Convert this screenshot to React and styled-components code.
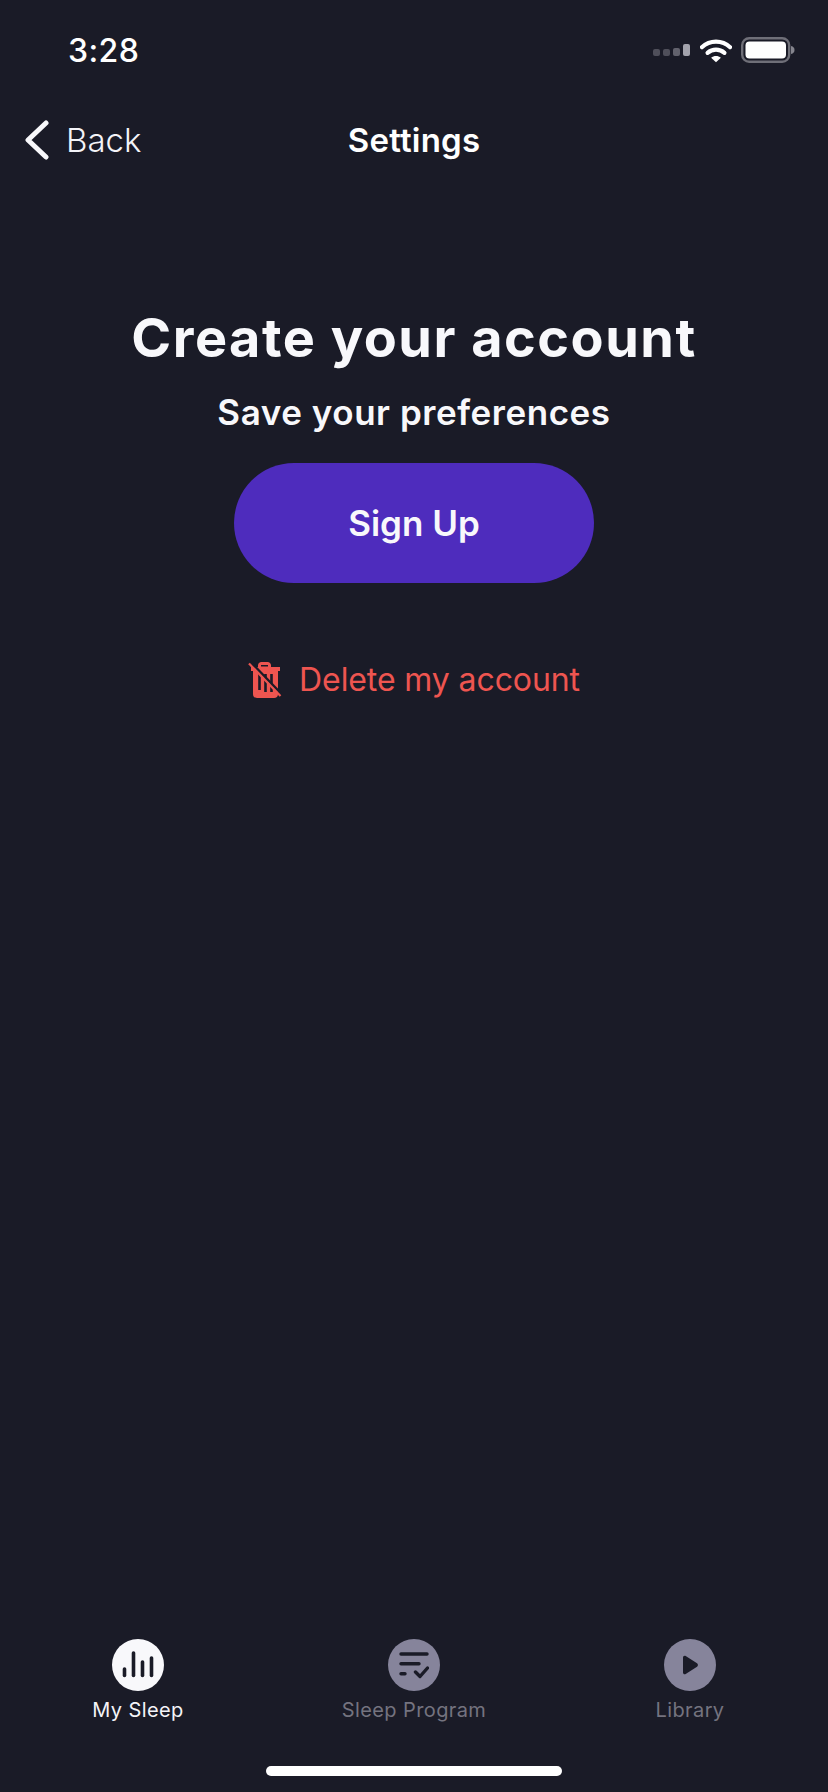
import React from "react";
import styled, { createGlobalStyle } from "styled-components";

const GlobalStyle = createGlobalStyle`
  html, body {
    margin: 0;
    padding: 0;
    background: #1a1b27;
  }
`;

const Screen = styled.div`
  width: 828px;
  height: 1792px;
  display: flex;
  flex-direction: column;
  background: #1a1b27;
  color: #fff;
  font-family: Inter, "Liberation Sans", sans-serif;
  overflow: hidden;
`;

const StatusBar = styled.div`
  height: 100px;
  box-sizing: border-box;
  padding: 0 33px 0 68px;
  display: flex;
  align-items: center;
  justify-content: space-between;
`;

const Time = styled.div`
  font-size: 32px;
  font-weight: 500;
  letter-spacing: 0.4px;
`;

const StatusIcons = styled.div`
  display: flex;
  align-items: center;
  gap: 9px;
`;

const NavBar = styled.div`
  height: 80px;
  box-sizing: border-box;
  padding: 0 24px;
  display: grid;
  grid-template-columns: 1fr auto 1fr;
  align-items: center;
`;

const BackLink = styled.div`
  display: flex;
  align-items: center;
  gap: 16px;
  font-size: 33px;
  font-weight: 350;
  color: #f4f4f8;
`;

const NavTitle = styled.div`
  font-size: 33px;
  font-weight: 600;
  letter-spacing: 0.2px;
`;

const Main = styled.main`
  flex: 1;
  display: flex;
  flex-direction: column;
  align-items: center;
  padding-top: 121px;
`;

const Title = styled.h1`
  margin: 0;
  font-size: 54px;
  line-height: 74px;
  font-weight: 700;
  color: #f8f8fb;
  letter-spacing: 1.5px;
`;

const Subtitle = styled.h2`
  margin: 15px 0 0;
  font-size: 35px;
  line-height: 44px;
  font-weight: 600;
  color: #f8f8fb;
  letter-spacing: 0.55px;
`;

const SignUpButton = styled.button`
  margin-top: 29px;
  width: 360px;
  height: 120px;
  border: none;
  border-radius: 60px;
  background: #4e2cbd;
  color: #f8f8fb;
  font-family: inherit;
  font-size: 35px;
  font-weight: 600;
`;

const DeleteRow = styled.div`
  margin-top: 77px;
  display: flex;
  align-items: center;
  gap: 17px;
  font-size: 32px;
  font-weight: 400;
  letter-spacing: -0.1px;
  color: #ee5550;
`;

const TabBar = styled.nav`
  display: grid;
  grid-template-columns: repeat(3, 1fr);
  justify-items: center;
`;

const Tab = styled.div`
  display: flex;
  flex-direction: column;
  align-items: center;
  gap: 6px;
  color: ${(p) => (p.$active ? "#f4f4f8" : "#74737f")};
  font-size: 20px;
  line-height: 26px;
  letter-spacing: 0.4px;
`;

const TabIcon = styled.div`
  width: 52px;
  height: 52px;
  border-radius: 50%;
  display: flex;
  align-items: center;
  justify-content: center;
  background: ${(p) => (p.$active ? "#f8f8fb" : "#86849b")};
`;

const HomeArea = styled.div`
  height: 69px;
  box-sizing: border-box;
  padding-top: 43px;
  display: flex;
  justify-content: center;
`;

const HomeBar = styled.div`
  width: 296px;
  height: 10px;
  border-radius: 5px;
  background: #fff;
`;

const SignalIcon = () => (
  <svg width="38" height="14" viewBox="0 0 38 14">
    <rect x="0" y="6" width="7" height="7" rx="2" fill="#4f4f5a" />
    <rect x="10" y="6" width="7" height="7" rx="2" fill="#4f4f5a" />
    <rect x="20" y="5" width="7" height="8" rx="2" fill="#62626d" />
    <rect x="30" y="1" width="7" height="12" rx="2" fill="#a3a3ad" />
  </svg>
);

const WifiIcon = () => (
  <svg width="32" height="25" viewBox="0 0 34 26" fill="none">
    <path d="M2 9.5C10.5 1.5 23.5 1.5 32 9.5" stroke="#fff" strokeWidth="4.4" strokeLinecap="round" />
    <path d="M8 15.5C13.2 11 20.8 11 26 15.5" stroke="#fff" strokeWidth="4.4" strokeLinecap="round" />
    <path d="M17 25.5L11.8 20.6C14.8 18.4 19.2 18.4 22.2 20.6Z" fill="#fff" />
  </svg>
);

const BatteryIcon = () => (
  <svg width="54" height="26" viewBox="0 0 54 26">
    <rect x="1.2" y="1.2" width="47" height="23.6" rx="7" fill="none" stroke="#6f6f78" strokeWidth="2.4" />
    <rect x="4.5" y="4.5" width="40.5" height="17" rx="4" fill="#fff" />
    <path d="M50 9C52.5 9.5 53.5 11 53.5 13C53.5 15 52.5 16.5 50 17Z" fill="#85858e" />
  </svg>
);

const ChevronLeft = () => (
  <svg width="26" height="40" viewBox="0 0 26 40" fill="none">
    <path d="M22 3L4 20L22 37" stroke="#f8f8fb" strokeWidth="5" strokeLinecap="round" strokeLinejoin="round" />
  </svg>
);

const TrashOffIcon = () => (
  <svg width="34" height="38" viewBox="0 0 34 38" fill="none">
    <path d="M10 6V4.5C10 2.5 11.5 1 13.5 1H19.5C21.5 1 23 2.5 23 4.5V6H32V10H30V33C30 35.5 28.5 37 26 37H9C6.5 37 5 35.5 5 33V10H3V6Z" fill="#ee5550" />
    <path d="M13 5.5V4H20V5.5Z" fill="#1a1b27" />
    <path d="M11.5 13V29M17.5 13V31M23.5 13V31" stroke="#1a1b27" strokeWidth="2.6" />
    <path d="M2.5 1L34 33.5" stroke="#1a1b27" strokeWidth="2.6" />
    <path d="M1 2.5L32.5 35" stroke="#ee5550" strokeWidth="2.2" />
  </svg>
);

const BarsIcon = () => (
  <svg width="34" height="28" viewBox="0 0 34 28" fill="none" stroke="#1a1b27" strokeWidth="3.6" strokeLinecap="round">
    <path d="M3.5 18V24.5" />
    <path d="M12.5 2V24.5" />
    <path d="M21.5 11V24.5" />
    <path d="M30.5 7V24.5" />
  </svg>
);

const ProgramIcon = () => (
  <svg width="30" height="28" viewBox="0 0 30 28" fill="none" stroke="#1a1b27" strokeWidth="3.4" strokeLinecap="round" strokeLinejoin="round">
    <path d="M2 3H28" />
    <path d="M2 12.7H20" />
    <path d="M2 22.7H6" />
    <path d="M16.5 21L21 25.5L28.5 17" />
  </svg>
);

const PlayIcon = () => (
  <svg width="18" height="20" viewBox="0 0 18 20">
    <path d="M2 2.5C2 1 3.4 0.2 4.7 1L16 8.2C17.2 9 17.2 10.9 16 11.7L4.7 19C3.4 19.8 2 19 2 17.5Z" fill="#1a1b27" />
  </svg>
);

const tabs = [
  { label: "My Sleep", icon: <BarsIcon />, active: true },
  { label: "Sleep Program", icon: <ProgramIcon /> },
  { label: "Library", icon: <PlayIcon /> },
];

export default function App() {
  return (
    <Screen>
      <GlobalStyle />
      <StatusBar>
        <Time>3:28</Time>
        <StatusIcons>
          <SignalIcon />
          <WifiIcon />
          <BatteryIcon />
        </StatusIcons>
      </StatusBar>
      <NavBar>
        <BackLink>
          <ChevronLeft />
          Back
        </BackLink>
        <NavTitle>Settings</NavTitle>
      </NavBar>
      <Main>
        <Title>Create your account</Title>
        <Subtitle>Save your preferences</Subtitle>
        <SignUpButton>Sign Up</SignUpButton>
        <DeleteRow>
          <TrashOffIcon />
          Delete my account
        </DeleteRow>
      </Main>
      <TabBar>
        {tabs.map((tab) => (
          <Tab key={tab.label} $active={tab.active}>
            <TabIcon $active={tab.active}>{tab.icon}</TabIcon>
            {tab.label}
          </Tab>
        ))}
      </TabBar>
      <HomeArea>
        <HomeBar />
      </HomeArea>
    </Screen>
  );
}
